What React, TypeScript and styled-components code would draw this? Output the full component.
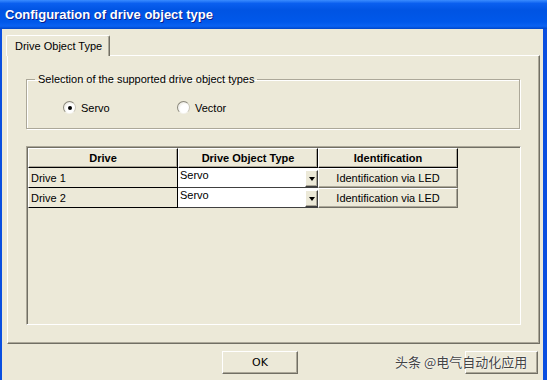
import { Fragment } from 'react';
import styled, { createGlobalStyle } from 'styled-components';

const GlobalStyle = createGlobalStyle`
    html, body {
        margin: 0;
        padding: 0;
        background: #ECE9D8;
    }
    * {
        box-sizing: border-box;
    }
`

const Window = styled.div`
    width: 547px;
    height: 380px;
    display: flex;
    flex-direction: column;
    background: #ECE9D8;
    font-family: "Liberation Sans", Arial, sans-serif;
    font-size: 11px;
    color: #000;
    overflow: hidden;
    position: relative;
`

const TitleBar = styled.div`
    height: 29px;
    flex: none;
    display: flex;
    align-items: center;
    padding-left: 5px;
    background: linear-gradient(to bottom, #3A8CFF 0%, #0A5FEF 12%, #0054E3 35%, #0058EA 75%, #0A62F2 90%, #0046C8 100%);
    color: #fff;
    font-size: 13px;
    font-weight: bold;
    text-shadow: 1px 1px 0 #0A1E8C;
`

const Body = styled.div`
    flex: 1;
    display: flex;
    flex-direction: column;
    border-left: 2px solid #0A4FE0;
    border-right: 4px solid #0A4FE0;
    padding: 6px 0 0 4px;
`

const TabStrip = styled.div`
    display: flex;
    height: 20px;
`

const Tab = styled.div`
    width: 104px;
    height: 21px;
    padding-left: 8px;
    display: flex;
    align-items: center;
    background: #ECE9D8;
    border-top: 1px solid #fff;
    border-left: 1px solid #fff;
    border-right: 1px solid #716F64;
    box-shadow: inset -1px 0 0 #ACA899;
    border-radius: 2px 2px 0 0;
    position: relative;
    z-index: 1;
`

const Panel = styled.div`
    width: 533px;
    height: 289px;
    margin-left: 1px;
    border-top: 1px solid #fff;
    border-left: 1px solid #fff;
    border-right: 1px solid #716F64;
    border-bottom: 1px solid #716F64;
    box-shadow: inset -1px -1px 0 #ACA899;
    padding: 0 0 0 18px;
    display: flex;
    flex-direction: column;
`

const GroupBox = styled.fieldset`
    width: 494px;
    height: 56px;
    margin: 17px 0 0 0;
    padding: 15px 0 0 8px;
    border: 1px solid #ACA899;
    box-shadow: 1px 1px 0 #fff, inset 1px 1px 0 #fff;
`

const Legend = styled.legend`
    padding: 0 3px;
    line-height: 13px;
    font-size: 11px;
`

const RadioRow = styled.div`
    display: flex;
    margin-left: 28px;
    height: 13px;
    align-items: center;
`

const RadioItem = styled.label`
    width: 114px;
    display: flex;
    align-items: center;
    gap: 5px;
`

const RadioCircle = styled.span<{ $checked?: boolean }>`
    width: 13px;
    height: 13px;
    border-radius: 50%;
    border: 1px solid;
    border-color: #8A887C #C9C6B8 #F4F3EE #8A887C;
    background: radial-gradient(circle at 65% 65%, #fff 0%, #fff 45%, #DCD9CB 100%);
    display: flex;
    align-items: center;
    justify-content: center;
    &::after {
        content: '';
        display: ${p => p.$checked ? 'block' : 'none'};
        width: 4px;
        height: 4px;
        border-radius: 50%;
        background: #000;
    }
`

const TableBox = styled.div`
    width: 495px;
    height: 179px;
    margin-top: 17px;
    border-top: 1px solid #ACA899;
    border-left: 1px solid #ACA899;
    border-right: 1px solid #fff;
    border-bottom: 1px solid #fff;
    box-shadow: inset 1px 1px 0 #716F64;
    padding: 1px 0 0 1px;
`

const Grid = styled.div`
    display: grid;
    grid-template-columns: 150px 140px 140px;
    grid-auto-rows: 20px;
`

const HeaderCell = styled.div`
    display: flex;
    align-items: center;
    justify-content: center;
    font-weight: bold;
    border-top: 1px solid #fff;
    border-left: 1px solid #fff;
    border-right: 1px solid #000;
    border-bottom: 1px solid #000;
    box-shadow: inset -1px -1px 0 #ACA899;
`

const DriveCell = styled.div`
    display: flex;
    align-items: center;
    padding-left: 2px;
    border-left: 1px solid #fff;
    border-right: 1px solid #000;
    border-bottom: 1px solid #000;
`

const ComboCell = styled.div`
    display: flex;
    justify-content: space-between;
    background: #fff;
    padding: 1px 0 0 2px;
    border-bottom: 1px solid #404040;
    line-height: 13px;
`

const DropButton = styled.div`
    width: 13px;
    height: 17px;
    margin-top: 1px;
    display: flex;
    align-items: center;
    justify-content: center;
    background: #ECE9D8;
    border-top: 1px solid #fff;
    border-left: 1px solid #fff;
    border-right: 1px solid #404040;
    border-bottom: 1px solid #404040;
    box-shadow: inset -1px -1px 0 #ACA899;
`

const Arrow = styled.span`
    width: 0;
    height: 0;
    border-left: 3.5px solid transparent;
    border-right: 3.5px solid transparent;
    border-top: 4px solid #000;
`

const IdentButton = styled.div`
    display: flex;
    align-items: center;
    justify-content: center;
    background: #ECE9D8;
    border-top: 1px solid #fff;
    border-left: 1px solid #fff;
    border-right: 1px solid #716F64;
    border-bottom: 1px solid #716F64;
    box-shadow: inset -1px -1px 0 #ACA899;
`

const Footer = styled.div`
    display: flex;
    height: 23px;
    margin-top: 7px;
    padding-left: 216px;
    padding-right: 5px;
`

const Button = styled.button<{ $wide?: number }>`
    width: ${p => p.$wide ?? 76}px;
    height: 23px;
    margin: 0;
    padding: 0;
    background: #ECE9D8;
    border-top: 1px solid #fff;
    border-left: 1px solid #fff;
    border-right: 1px solid #716F64;
    border-bottom: 1px solid #716F64;
    box-shadow: inset -1px -1px 0 #ACA899;
    font-family: "DejaVu Sans", "Liberation Sans", sans-serif;
    font-size: 11px;
    color: #000;
    &:last-child {
        margin-left: auto;
    }
`

const Watermark = styled.div`
    position: absolute;
    left: 395px;
    top: 353px;
    font-family: "Noto Sans CJK SC", sans-serif;
    font-size: 13px;
    line-height: 17px;
    color: #444;
    text-shadow: 0 0 2px #fff, 0 0 1px #fff;
    white-space: nowrap;
`

const rows = [
    { drive: 'Drive 1', type: 'Servo' },
    { drive: 'Drive 2', type: 'Servo' },
]

export default function App() {
    return (
        <Window>
            <GlobalStyle />
            <TitleBar>Configuration of drive object type</TitleBar>
            <Body>
                <TabStrip>
                    <Tab>Drive Object Type</Tab>
                </TabStrip>
                <Panel>
                    <GroupBox>
                        <Legend>Selection of the supported drive object types</Legend>
                        <RadioRow>
                            <RadioItem><RadioCircle $checked />Servo</RadioItem>
                            <RadioItem><RadioCircle />Vector</RadioItem>
                        </RadioRow>
                    </GroupBox>
                    <TableBox>
                        <Grid>
                            <HeaderCell>Drive</HeaderCell>
                            <HeaderCell>Drive Object Type</HeaderCell>
                            <HeaderCell>Identification</HeaderCell>
                            {rows.map(r => (
                                <Fragment key={r.drive}>
                                    <DriveCell>{r.drive}</DriveCell>
                                    <ComboCell>
                                        <span>{r.type}</span>
                                        <DropButton><Arrow /></DropButton>
                                    </ComboCell>
                                    <IdentButton>Identification via LED</IdentButton>
                                </Fragment>
                            ))}
                        </Grid>
                    </TableBox>
                </Panel>
                <Footer>
                    <Button>OK</Button>
                    <Button $wide={73} />
                </Footer>
            </Body>
            <Watermark>头条 @电气自动化应用</Watermark>
        </Window>
    )
}
